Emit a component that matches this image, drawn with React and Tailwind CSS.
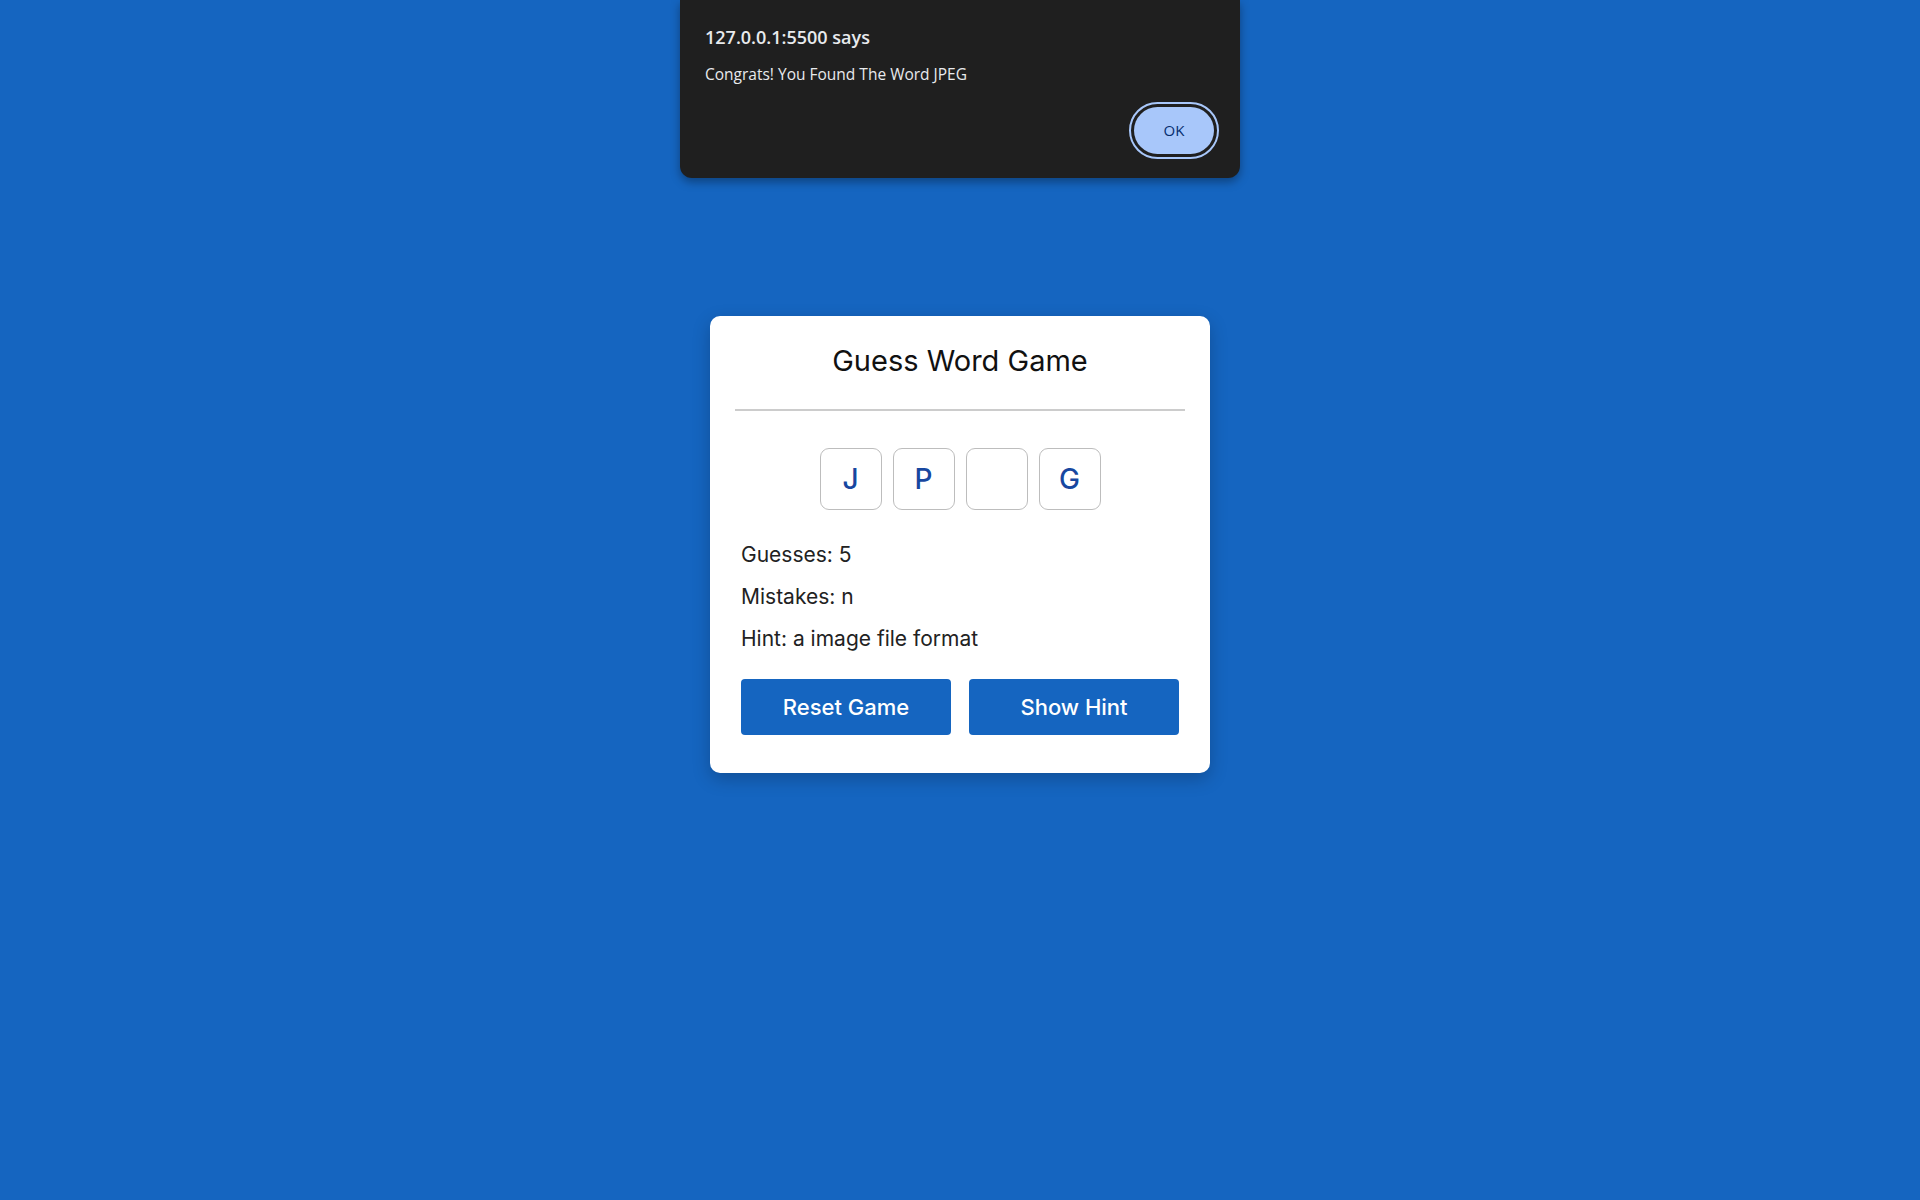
const letters = ['J', 'P', '', 'G'];

const AlertDialog = () => {
  return (
    <div className="absolute top-0 left-[680px] w-[560px] h-[178px] rounded-b-[12px] bg-[#1f1f1f] shadow-[0_4px_10px_rgba(0,0,0,0.35)] px-[25px] pt-[25px] font-['Open_Sans',sans-serif] text-[#e8eaed]">
      <div className="text-[18px] font-semibold leading-[24px]">127.0.0.1:5500 says</div>
      <div className="mt-[14px] text-[15.5px] leading-[22px]">Congrats! You Found The Word JPEG</div>
      <div className="flex justify-end mt-[17px] mr-[-4px]">
        <div className="w-[90px] h-[57px] rounded-full border-2 border-[#a8c7fa] p-[3px]">
          <button className="w-full h-full rounded-full bg-[#a8c7fa] text-[#062e6f] text-[15px] font-medium">
            OK
          </button>
        </div>
      </div>
    </div>
  );
};

export default function App() {
  return (
    <div className="relative min-h-screen bg-[#1565c0] flex justify-center pt-[316px] font-['Inter',sans-serif]">
      <AlertDialog />

      {/* 게임 카드 */}
      <div className="w-[500px] h-fit rounded-[10px] bg-white px-[25px] pt-[25px] pb-[38px] shadow-[0_6px_18px_rgba(0,0,0,0.22)]">
        <h1 className="text-center text-[29px] leading-[40px] text-[#111]">Guess Word Game</h1>
        <div className="mt-[28px] h-[2px] bg-[#cccccc]" />

        <div className="mt-[37px] flex justify-center gap-[11px]">
          {letters.map((l, i) => (
            <div
              key={i}
              className="w-[62px] h-[62px] rounded-[9px] border border-[#bdbdbd] flex items-center justify-center text-[28px] font-medium text-[#1747a0]"
            >
              {l}
            </div>
          ))}
        </div>

        <div className="mt-[24px] px-[6px] text-[21px] leading-[42px] text-[#222]">
          <p>Guesses: 5</p>
          <p>Mistakes: n</p>
          <p>Hint: a image file format</p>
        </div>

        <div className="mt-[19px] px-[6px] grid grid-cols-2 gap-[18px]">
          <button className="h-[56px] rounded-[4px] bg-[#1565c0] text-white text-[22px] font-medium">
            Reset Game
          </button>
          <button className="h-[56px] rounded-[4px] bg-[#1565c0] text-white text-[22px] font-medium">
            Show Hint
          </button>
        </div>
      </div>
    </div>
  );
}
